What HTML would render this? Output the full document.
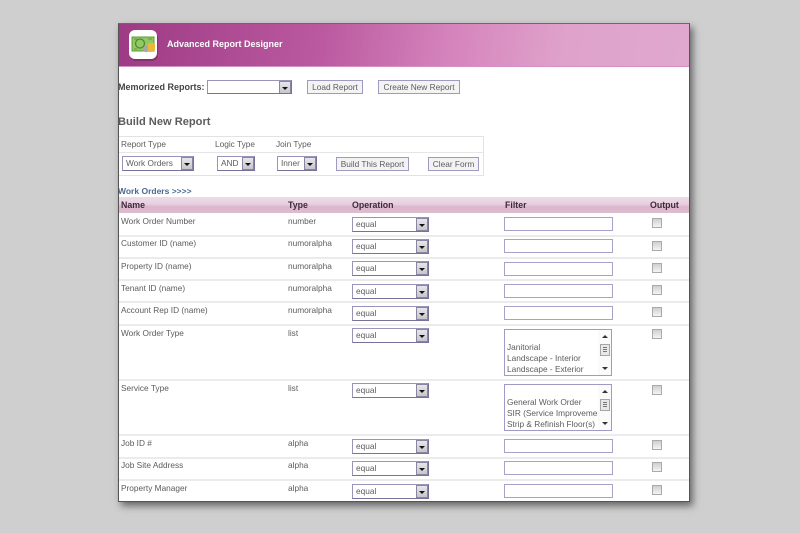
<!DOCTYPE html>
<html><head><meta charset="utf-8">
<style>
html,body{margin:0;padding:0}
body{width:800px;height:533px;background:#cfcfcf;position:relative;overflow:hidden;font-family:"Liberation Sans",sans-serif;font-size:8.3px;color:#5c5c5c}
#p{position:absolute;left:118px;top:23px;box-sizing:border-box;width:572px;height:479px;background:#fff;border:1px solid #555;border-top-color:#6a6a6a;box-shadow:3px 4px 7px rgba(0,0,0,.5);overflow:hidden}
#w{position:absolute;left:0;top:0;width:570px;height:477px;filter:blur(.3px)}
#h{position:absolute;left:0;top:0;width:570px;height:43px;border-bottom:1px solid #d58fc3;box-sizing:border-box;background:linear-gradient(97deg,#9d3a85 0%,#bb5aa0 36%,#d584bc 58%,#dfa2cb 78%,#e0a8ce 100%)}
.a{position:absolute;white-space:nowrap;line-height:11px}
.s,.i,.b,.l,.c,.sep{position:absolute;box-sizing:border-box}
.s{background:#fff;border:1px solid #9a94bb;border-right-color:#77729a;border-bottom-color:#77729a;height:15px;line-height:13px;padding-left:3px;white-space:nowrap;overflow:hidden;color:#5c5c5c}
.s:after{content:"";position:absolute;right:0;top:0;width:12px;height:13px;box-sizing:border-box;background:linear-gradient(#e6e6ea,#c6c6cc);border:1px solid #8a86a2}
.s:before{content:"";position:absolute;right:3px;top:6px;border:3px solid transparent;border-top:3px solid #111;border-bottom:0;z-index:1}
.i{background:#fff;border:1px solid #a8a2c8;width:109px;height:14px}
.b{background:#f3f3f3;border:1px solid #9f9abf;height:14px;line-height:12px;text-align:center;color:#5c5c5c;white-space:nowrap}
.c{width:10px;height:10px;background:linear-gradient(#cfcfcf,#f4f4f4);border:1px solid #aaa}
.sep{left:0;width:570px;height:2px;background:#ebebeb}
.l{width:108px;height:47px;background:#fff;border:1px solid #a09ac4;overflow:hidden}
.l div{position:absolute;left:2px;line-height:11px;white-space:nowrap;color:#5c5c5c}
.l .t{position:absolute;right:0;top:0;width:13px;height:45px;background:#fafafa}
.l .u{position:absolute;right:3px;top:5px;border:3px solid transparent;border-bottom:3px solid #333;border-top:0}
.l .d{position:absolute;right:3px;bottom:5px;border:3px solid transparent;border-top:3px solid #333;border-bottom:0}
.l .m{position:absolute;right:1px;top:14px;width:10px;height:12px;box-sizing:border-box;border:1px solid #a5a5a5;background:repeating-linear-gradient(#777 0 1px,#e8e8e8 1px 2px) 2px 2px/4px 6px no-repeat #e8e8e8}
.hd{font-weight:bold;color:#3c2a3a;font-size:8.8px}
</style></head><body>
<div id="p"><div id="w">
 <div id="h"></div>
 <svg style="position:absolute;left:9px;top:5px" width="32" height="33" viewBox="0 0 32 33">
  <rect x="2" y="3" width="28" height="29" rx="6" fill="#5a2450" opacity=".45"/>
  <rect x="1" y="1" width="28" height="29" rx="6" fill="#fff"/>
  <rect x="4" y="8" width="22" height="14" fill="#93c963" stroke="#5d9a3a"/>
  <circle cx="12" cy="14.5" r="4.5" fill="none" stroke="#4e8a33" stroke-width="1.3"/>
  <path d="M6 10h3M6 20h3M20 10h4" stroke="#5d9a3a"/>
  <circle cx="18" cy="20" r="3.2" fill="#a8a8a8"/>
  <rect x="20" y="14" width="7" height="8" rx="1.5" fill="#eab93a"/>
 </svg>
 <div class="a" style="left:48px;top:15px;color:#fff;font-weight:bold;font-size:9px">Advanced Report Designer</div>

 <div class="a" style="left:-1px;top:58px;font-weight:bold;font-size:9px;color:#444">Memorized Reports:</div>
 <div class="s" style="left:88px;top:56px;width:85px;height:14px"></div>
 <div class="b" style="left:188px;top:56px;width:56px">Load Report</div>
 <div class="b" style="left:259px;top:56px;width:82px">Create New Report</div>

 <div class="a" style="left:-1px;top:92px;font-weight:bold;font-size:11.1px;line-height:13px;color:#5c5c5c">Build New Report</div>

 <div style="position:absolute;left:0;top:112px;width:365px;height:40px;border:1px solid #e2e2e2;border-left:0;box-sizing:border-box"></div>
 <div style="position:absolute;left:0;top:128px;width:364px;height:1px;background:#e6e6e6"></div>
 <div class="a" style="left:2px;top:115px">Report Type</div>
 <div class="a" style="left:96px;top:115px">Logic Type</div>
 <div class="a" style="left:157px;top:115px">Join Type</div>
 <div class="s" style="left:3px;top:132px;width:72px">Work Orders</div>
 <div class="s" style="left:98px;top:132px;width:38px">AND</div>
 <div class="s" style="left:158px;top:132px;width:40px">Inner</div>
 <div class="b" style="left:217px;top:133px;width:73px">Build This Report</div>
 <div class="b" style="left:309px;top:133px;width:51px">Clear Form</div>

 <div class="a" style="left:-1px;top:162px;color:#4a6a92;font-weight:bold;font-size:8.5px">Work Orders &gt;&gt;&gt;&gt;</div>

 <div style="position:absolute;left:0;top:173px;width:570px;height:16px;background:linear-gradient(#e8e0e6 0,#ecd9e6 10%,#e6cfdf 45%,#dcb6cc 60%,#dfbcd0 100%)"></div>
 <div class="a hd" style="left:2px;top:176px">Name</div>
 <div class="a hd" style="left:169px;top:176px">Type</div>
 <div class="a hd" style="left:233px;top:176px">Operation</div>
 <div class="a hd" style="left:386px;top:176px">Filter</div>
 <div class="a hd" style="left:531px;top:176px">Output</div>

 <div class="sep" style="top:211px"></div>
 <div class="sep" style="top:233px"></div>
 <div class="sep" style="top:255px"></div>
 <div class="sep" style="top:277px"></div>
 <div class="sep" style="top:300px"></div>
 <div class="sep" style="top:355px"></div>
 <div class="sep" style="top:410px"></div>
 <div class="sep" style="top:433px"></div>
 <div class="sep" style="top:455px"></div>

 <div class="a" style="left:2px;top:192px">Work Order Number</div><div class="a" style="left:169px;top:192px">number</div>
 <div class="s" style="left:233px;top:193px;width:77px">equal</div><div class="i" style="left:385px;top:193px"></div><div class="c" style="left:533px;top:194px"></div>

 <div class="a" style="left:2px;top:214px">Customer ID (name)</div><div class="a" style="left:169px;top:214px">numoralpha</div>
 <div class="s" style="left:233px;top:215px;width:77px">equal</div><div class="i" style="left:385px;top:215px"></div><div class="c" style="left:533px;top:217px"></div>

 <div class="a" style="left:2px;top:237px">Property ID (name)</div><div class="a" style="left:169px;top:237px">numoralpha</div>
 <div class="s" style="left:233px;top:237px;width:77px">equal</div><div class="i" style="left:385px;top:238px"></div><div class="c" style="left:533px;top:239px"></div>

 <div class="a" style="left:2px;top:259px">Tenant ID (name)</div><div class="a" style="left:169px;top:259px">numoralpha</div>
 <div class="s" style="left:233px;top:260px;width:77px">equal</div><div class="i" style="left:385px;top:260px"></div><div class="c" style="left:533px;top:261px"></div>

 <div class="a" style="left:2px;top:281px">Account Rep ID (name)</div><div class="a" style="left:169px;top:281px">numoralpha</div>
 <div class="s" style="left:233px;top:282px;width:77px">equal</div><div class="i" style="left:385px;top:282px"></div><div class="c" style="left:533px;top:283px"></div>

 <div class="a" style="left:2px;top:304px">Work Order Type</div><div class="a" style="left:169px;top:304px">list</div>
 <div class="s" style="left:233px;top:304px;width:77px">equal</div><div class="c" style="left:533px;top:305px"></div>
 <div class="l" style="left:385px;top:305px">
  <div style="top:12px">Janitorial</div><div style="top:23px">Landscape - Interior</div><div style="top:34px">Landscape - Exterior</div>
  <span class="t"></span><span class="u"></span><span class="m"></span><span class="d"></span>
 </div>

 <div class="a" style="left:2px;top:359px">Service Type</div><div class="a" style="left:169px;top:359px">list</div>
 <div class="s" style="left:233px;top:359px;width:77px">equal</div><div class="c" style="left:533px;top:361px"></div>
 <div class="l" style="left:385px;top:360px">
  <div style="top:12px">General Work Order</div><div style="top:23px">SIR (Service Improvement</div><div style="top:34px">Strip &amp; Refinish Floor(s)</div>
  <span class="t"></span><span class="u"></span><span class="m"></span><span class="d"></span>
 </div>

 <div class="a" style="left:2px;top:414px">Job ID #</div><div class="a" style="left:169px;top:414px">alpha</div>
 <div class="s" style="left:233px;top:415px;width:77px">equal</div><div class="i" style="left:385px;top:415px"></div><div class="c" style="left:533px;top:416px"></div>

 <div class="a" style="left:2px;top:436px">Job Site Address</div><div class="a" style="left:169px;top:436px">alpha</div>
 <div class="s" style="left:233px;top:437px;width:77px">equal</div><div class="i" style="left:385px;top:437px"></div><div class="c" style="left:533px;top:438px"></div>

 <div class="a" style="left:2px;top:459px">Property Manager</div><div class="a" style="left:169px;top:459px">alpha</div>
 <div class="s" style="left:233px;top:460px;width:77px">equal</div><div class="i" style="left:385px;top:460px"></div><div class="c" style="left:533px;top:461px"></div>
</div></div>
</body></html>
